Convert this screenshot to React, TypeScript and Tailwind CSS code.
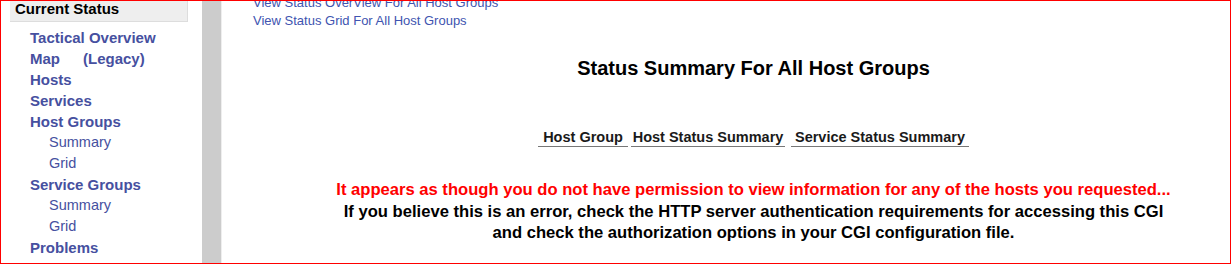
import React from 'react'

type NavItem = {
    label: string
    sub?: boolean
    extra?: string
}

const navItems: NavItem[] = [
    { label: 'Tactical Overview' },
    { label: 'Map', extra: '(Legacy)' },
    { label: 'Hosts' },
    { label: 'Services' },
    { label: 'Host Groups' },
    { label: 'Summary', sub: true },
    { label: 'Grid', sub: true },
    { label: 'Service Groups' },
    { label: 'Summary', sub: true },
    { label: 'Grid', sub: true },
    { label: 'Problems' },
]

const SideMenu = () => {
    return (
        <div className="w-[201px] shrink-0">
            <div className="ml-[9px] w-[178px] h-[21px] bg-[#eeeeee] border-r border-b border-[#dddddd] pl-[5px]">
                <span className="block text-[15px] leading-[16px] font-bold text-black">Current Status</span>
            </div>
            <ul className="mt-[5px] text-[#4650a0] leading-[21px]">
                {navItems.map((item, i) => (
                    <li
                        key={i}
                        className={item.sub ? 'pl-[48px] text-[14.5px] font-normal' : 'pl-[29px] text-[15px] font-bold'}
                    >
                        {item.label}
                        {item.extra && <span className="ml-[23px]">{item.extra}</span>}
                    </li>
                ))}
            </ul>
        </div>
    )
}

const HeaderCell = ({ children, className }: { children: React.ReactNode; className: string }) => (
    <div className={`text-center whitespace-nowrap leading-[18px] text-[14.5px] font-bold text-[#1a1a1a] border-b border-[#777] ${className}`}>
        {children}
    </div>
)

const App = () => {
    return (
        <div
            className="w-[1231px] h-[264px] border border-[#ff0000] overflow-hidden flex bg-white"
            style={{ fontFamily: '"Liberation Sans", Arial, sans-serif' }}
        >
            <SideMenu />
            <div className="w-[19px] shrink-0 bg-[#cccccc]" />
            <div className="w-px shrink-0 bg-[#eeeeee]" />
            <div className="flex-1 flex flex-col">
                <div className="pl-[31px] mt-[-7px] text-[13px] leading-[18px] text-[#4054b0]">
                    <div>View Status OverView For All Host Groups</div>
                    <div>View Status Grid For All Host Groups</div>
                </div>
                <div className="ml-[55px] flex flex-col items-center">
                    <div className="mt-[26px] text-[20px] leading-[24px] font-bold text-black">
                        Status Summary For All Host Groups
                    </div>
                    <div className="mt-[48px] flex">
                        <HeaderCell className="w-[90px]">Host Group</HeaderCell>
                        <HeaderCell className="w-[154px] ml-[3px]">Host Status Summary</HeaderCell>
                        <HeaderCell className="w-[178px] ml-[6px]">Service Status Summary</HeaderCell>
                    </div>
                    <div className="mt-[32px] text-center text-[16.6px] font-bold leading-[21.5px] whitespace-nowrap">
                        <div className="text-[#ff0000]">
                            It appears as though you do not have permission to view information for any of the hosts you requested...
                        </div>
                        <div className="text-black">
                            If you believe this is an error, check the HTTP server authentication requirements for accessing this CGI
                        </div>
                        <div className="text-black">
                            and check the authorization options in your CGI configuration file.
                        </div>
                    </div>
                </div>
            </div>
        </div>
    )
}

export default App
